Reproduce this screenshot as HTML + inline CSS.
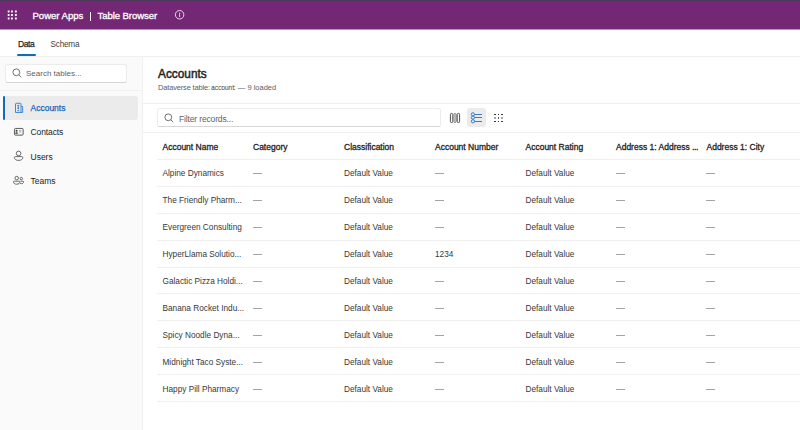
<!DOCTYPE html>
<html><head><meta charset="utf-8">
<style>
*{box-sizing:border-box;margin:0;padding:0}
html,body{width:800px;height:430px;overflow:hidden;background:#fff;font-family:"Liberation Sans",sans-serif;color:#242424}
.a{position:absolute;white-space:nowrap}
.t{position:absolute;white-space:nowrap;line-height:1;transform-origin:0 0}
</style></head><body>

<style>
#hdr{position:absolute;left:0;top:0;width:800px;height:29px;background:#742774;border-top:1px solid #4d3a5c}
.ht{color:#fff;font-size:9.6px;-webkit-text-stroke:0.3px #fff}
.tab{font-size:8.5px}
#side{position:absolute;left:0;top:57px;width:143px;height:373px;background:#fafafa;border-right:1px solid #f0f0f0}
.box{position:absolute;background:#fff;border:1px solid #ececec;border-bottom-color:#d6d6d6;border-radius:2.5px}
.ph{font-size:8px;color:#5f5f5f}
.nl{font-size:8.5px;color:#242424}
.th{font-size:8.5px;color:#242424;-webkit-text-stroke:0.3px #242424}
.td{font-size:8.25px;color:#383838}
.dash{width:8.6px;height:1px;background:#a4a4a4}
</style>
<div class="a" style="left:0;top:29px;width:800px;height:1px;background:#b993b9"></div>
<div id="hdr">
  <svg class="a" style="left:0;top:0" width="22" height="24" fill="#fff"><rect x="7.7" y="9.5" width="1.9" height="1.9" rx="0.3"/><rect x="11.0" y="9.5" width="1.9" height="1.9" rx="0.3"/><rect x="14.9" y="9.5" width="1.9" height="1.9" rx="0.3"/><rect x="7.7" y="13.0" width="1.9" height="1.9" rx="0.3"/><rect x="11.0" y="13.0" width="1.9" height="1.9" rx="0.3"/><rect x="14.9" y="13.0" width="1.9" height="1.9" rx="0.3"/><rect x="7.7" y="16.5" width="1.9" height="1.9" rx="0.3"/><rect x="11.0" y="16.5" width="1.9" height="1.9" rx="0.3"/><rect x="14.9" y="16.5" width="1.9" height="1.9" rx="0.3"/></svg>
</div>
<div class="t ht" style="left:32.5px;top:11px;letter-spacing:-0.05px">Power Apps</div>
<div class="a" style="left:90px;top:12px;width:1px;height:9px;background:#fff"></div>
<div class="t ht" style="left:97.5px;top:11px;letter-spacing:-0.1px">Table Browser</div>
<svg class="a" style="left:174px;top:9px" width="11" height="11" viewBox="0 0 11 11" fill="none" stroke="#fff" stroke-width="0.8"><circle cx="5.6" cy="5.75" r="4.25"/><path d="M5.6 3.6v4.5" stroke-width="0.75"/></svg>
<div class="a" style="left:0;top:56px;width:800px;height:1px;background:#f0f0f0"></div>
<div class="t tab" style="left:18px;top:39.6px;-webkit-text-stroke:0.25px #242424;letter-spacing:-0.4px">Data</div>
<div class="t tab" style="left:50.5px;top:40.6px;color:#424242;font-size:8.2px;letter-spacing:-0.2px">Schema</div>
<div class="a" style="left:17px;top:54.3px;width:18.8px;height:2.2px;background:#0f6cbd;border-radius:1.1px"></div>
<div id="side"></div>
<div class="box" style="left:5px;top:64px;width:122px;height:19px"></div>
<svg class="a" style="left:11.5px;top:68px" width="10" height="10" viewBox="0 0 10 10" fill="none" stroke="#616161" stroke-width="0.9"><circle cx="4.3" cy="4.3" r="3.4"/><line x1="6.8" y1="6.8" x2="9.2" y2="9.2"/></svg>
<div class="t ph" style="left:26px;top:70px">Search tables...</div>
<div class="a" style="left:0;top:90px;width:142px;height:1px;background:#f0f0f0"></div>
<div class="a" style="left:3px;top:96px;width:135px;height:24px;background:#ebebeb;border-radius:3px"></div>
<div class="a" style="left:3px;top:96px;width:2.3px;height:24px;background:#0f6cbd;border-radius:1.2px"></div>
<svg class="a" style="left:14px;top:102px" width="10" height="12" viewBox="0 0 10 12" fill="none" stroke="#2f7bcf" stroke-width="0.9"><path d="M1.5 10.45V2.1a0.8 0.8 0 0 1 0.8-0.8h3.9a0.8 0.8 0 0 1 0.8 0.8V10.45z"/><path d="M7 4.3h1a0.7 0.7 0 0 1 0.7 0.7v5.45H7"/><path d="M3.3 3.4h2M4.3 3.4v4M3.3 6.2h2M3.3 8.7h2"/></svg>
<div class="t nl" style="left:30.5px;top:104px;color:#1a68b8;-webkit-text-stroke:0.25px #1a68b8">Accounts</div>
<svg class="a" style="left:13px;top:127px" width="12" height="10" viewBox="0 0 12 10" fill="none" stroke="#4a4a4a" stroke-width="0.9"><rect x="1.45" y="1.45" width="8.7" height="6.7" rx="1"/><circle cx="3.55" cy="3.7" r="1.05" fill="#3a3a3a" stroke="none"/><path d="M2.1 6.8c0-1 0.6-1.6 1.45-1.6s1.45 0.6 1.45 1.6z" fill="#3a3a3a" stroke="none"/><path d="M6 3.6h2.3M6 5h2.3" stroke="#8f8f8f" stroke-width="0.75"/></svg>
<div class="t nl" style="left:30.5px;top:128px;letter-spacing:-0.1px">Contacts</div>
<svg class="a" style="left:13px;top:150px" width="11" height="12" viewBox="0 0 11 12" fill="none" stroke="#505050" stroke-width="0.85"><circle cx="5.6" cy="3.45" r="2.3"/><path d="M1.4 7.6a1 1 0 0 1 1-1h6.4a1 1 0 0 1 1 1c0 1.7-1.7 2.8-4.2 2.8s-4.2-1.1-4.2-2.8z"/></svg>
<div class="t nl" style="left:30.5px;top:152.5px">Users</div>
<svg class="a" style="left:12px;top:174px" width="13" height="12" viewBox="0 0 13 12" fill="none" stroke="#505050" stroke-width="0.85"><circle cx="4.7" cy="4.1" r="1.75"/><circle cx="9.3" cy="4.6" r="1.2"/><path d="M1.5 7.9a0.7 0.7 0 0 1 0.7-0.7h5a0.7 0.7 0 0 1 0.7 0.7c0 1.4-1.3 2.3-3.2 2.3s-3.2-0.9-3.2-2.3z"/><path d="M8.4 7.2h2.5a0.7 0.7 0 0 1 0.7 0.7c0 1.1-0.9 1.8-2.3 1.8-0.5 0-0.9-0.1-1.2-0.2"/></svg>
<div class="t nl" style="left:30.5px;top:176.5px">Teams</div>

<div class="t" style="left:158.3px;top:67px;font-size:13px;-webkit-text-stroke:0.5px #242424;transform:scaleX(0.91)">Accounts</div>
<div class="t" style="left:158px;top:83.6px;font-size:7.5px;color:#616161;letter-spacing:-0.17px">Dataverse table:</div>
<div class="t" style="left:211px;top:85.6px;font-family:'Liberation Mono',monospace;font-size:6.6px;letter-spacing:-0.5px;color:#424242">account</div>
<div class="t" style="left:237.8px;top:83.6px;font-size:7.5px;color:#616161;letter-spacing:0px">— 9 loaded</div>
<div class="a" style="left:143px;top:103px;width:657px;height:1px;background:#f0f0f0"></div>
<div class="box" style="left:157px;top:108px;width:284px;height:19px"></div>
<svg class="a" style="left:163.7px;top:113px" width="10" height="10" viewBox="0 0 10 10" fill="none" stroke="#616161" stroke-width="0.9"><circle cx="4.3" cy="4.3" r="3.4"/><line x1="6.8" y1="6.8" x2="9.2" y2="9.2"/></svg>
<div class="t ph" style="left:179px;top:114.6px;font-size:8.5px;letter-spacing:-0.15px">Filter records...</div>
<svg class="a" style="left:449px;top:112px" width="12" height="12" viewBox="0 0 12 12" fill="none" stroke="#333" stroke-width="0.85"><rect x="1.4" y="1.4" width="2.4" height="9.2" rx="1.2"/><rect x="4.8" y="1.4" width="2.4" height="9.2" rx="1.2" fill="#c8c8c8" stroke="#8a8a8a"/><rect x="8.2" y="1.4" width="2.4" height="9.2" rx="1.2"/></svg>
<div class="a" style="left:467px;top:108px;width:19px;height:19px;background:#ebebeb;border-radius:3px"></div>
<svg class="a" style="left:470px;top:112px" width="13" height="12" viewBox="0 0 13 12" fill="none" stroke="#1f74c9" stroke-width="0.9"><circle cx="2.9" cy="2.3" r="1.6"/><circle cx="2.9" cy="5.6" r="1.6"/><circle cx="2.9" cy="9.3" r="1.6"/><path d="M4.5 2.5h7.5M4.5 5.5h7.5M4.5 9.5h7.5"/></svg>
<svg class="a" style="left:493px;top:112px" width="11" height="11" viewBox="0 0 11 11" fill="#3a3a3a"><rect x="1" y="2" width="2" height="1"/><rect x="5" y="2" width="1" height="1"/><rect x="8" y="2" width="2" height="1"/><rect x="1" y="5" width="2" height="2" fill-opacity="0.45"/><rect x="5" y="5" width="1" height="2" fill-opacity="0.8"/><rect x="8" y="5" width="2" height="2" fill-opacity="0.45"/><rect x="1" y="9" width="2" height="1"/><rect x="5" y="9" width="1" height="1"/><rect x="8" y="9" width="2" height="1"/></svg>
<div class="a" style="left:143px;top:132px;width:657px;height:1px;background:#f0f0f0"></div>

<div class="t th" style="left:162.5px;top:143px">Account Name</div>
<div class="t th" style="left:253px;top:143px">Category</div>
<div class="t th" style="left:344px;top:143px">Classification</div>
<div class="t th" style="left:435px;top:143px">Account Number</div>
<div class="t th" style="left:525.5px;top:143px">Account Rating</div>
<div class="t th" style="left:616px;top:143px">Address 1: Address <span style="letter-spacing:-0.4px">...</span></div>
<div class="t th" style="left:706.5px;top:143px">Address 1: City</div>
<div class="a" style="left:157px;top:159px;width:643px;height:1px;background:#f0f0f0"></div>
<div class="a" style="left:157px;top:186.00px;width:643px;height:1px;background:#f0f0f0"></div>
<div class="t td" style="left:162.5px;top:169.50px">Alpine Dynamics</div>
<div class="a dash" style="left:253px;top:173.00px"></div>
<div class="t td" style="left:344px;top:169.50px">Default Value</div>
<div class="a dash" style="left:435px;top:173.00px"></div>
<div class="t td" style="left:525.5px;top:169.50px">Default Value</div>
<div class="a dash" style="left:616px;top:173.00px"></div>
<div class="a dash" style="left:706px;top:173.00px"></div>
<div class="a" style="left:157px;top:213.00px;width:643px;height:1px;background:#f0f0f0"></div>
<div class="t td" style="left:162.5px;top:196.50px">The Friendly Pharm...</div>
<div class="a dash" style="left:253px;top:200.00px"></div>
<div class="t td" style="left:344px;top:196.50px">Default Value</div>
<div class="a dash" style="left:435px;top:200.00px"></div>
<div class="t td" style="left:525.5px;top:196.50px">Default Value</div>
<div class="a dash" style="left:616px;top:200.00px"></div>
<div class="a dash" style="left:706px;top:200.00px"></div>
<div class="a" style="left:157px;top:240.00px;width:643px;height:1px;background:#f0f0f0"></div>
<div class="t td" style="left:162.5px;top:223.50px">Evergreen Consulting</div>
<div class="a dash" style="left:253px;top:227.00px"></div>
<div class="t td" style="left:344px;top:223.50px">Default Value</div>
<div class="a dash" style="left:435px;top:227.00px"></div>
<div class="t td" style="left:525.5px;top:223.50px">Default Value</div>
<div class="a dash" style="left:616px;top:227.00px"></div>
<div class="a dash" style="left:706px;top:227.00px"></div>
<div class="a" style="left:157px;top:267.00px;width:643px;height:1px;background:#f0f0f0"></div>
<div class="t td" style="left:162.5px;top:250.50px">HyperLlama Solutio...</div>
<div class="a dash" style="left:253px;top:254.00px"></div>
<div class="t td" style="left:344px;top:250.50px">Default Value</div>
<div class="t td" style="left:435px;top:250.50px">1234</div>
<div class="t td" style="left:525.5px;top:250.50px">Default Value</div>
<div class="a dash" style="left:616px;top:254.00px"></div>
<div class="a dash" style="left:706px;top:254.00px"></div>
<div class="a" style="left:157px;top:293.00px;width:643px;height:1px;background:#f0f0f0"></div>
<div class="t td" style="left:162.5px;top:277.50px">Galactic Pizza Holdi...</div>
<div class="a dash" style="left:253px;top:281.00px"></div>
<div class="t td" style="left:344px;top:277.50px">Default Value</div>
<div class="a dash" style="left:435px;top:281.00px"></div>
<div class="t td" style="left:525.5px;top:277.50px">Default Value</div>
<div class="a dash" style="left:616px;top:281.00px"></div>
<div class="a dash" style="left:706px;top:281.00px"></div>
<div class="a" style="left:157px;top:320.00px;width:643px;height:1px;background:#f0f0f0"></div>
<div class="t td" style="left:162.5px;top:304.50px">Banana Rocket Indu...</div>
<div class="a dash" style="left:253px;top:308.00px"></div>
<div class="t td" style="left:344px;top:304.50px">Default Value</div>
<div class="a dash" style="left:435px;top:308.00px"></div>
<div class="t td" style="left:525.5px;top:304.50px">Default Value</div>
<div class="a dash" style="left:616px;top:308.00px"></div>
<div class="a dash" style="left:706px;top:308.00px"></div>
<div class="a" style="left:157px;top:347.00px;width:643px;height:1px;background:#f0f0f0"></div>
<div class="t td" style="left:162.5px;top:331.50px">Spicy Noodle Dyna...</div>
<div class="a dash" style="left:253px;top:335.00px"></div>
<div class="t td" style="left:344px;top:331.50px">Default Value</div>
<div class="a dash" style="left:435px;top:335.00px"></div>
<div class="t td" style="left:525.5px;top:331.50px">Default Value</div>
<div class="a dash" style="left:616px;top:335.00px"></div>
<div class="a dash" style="left:706px;top:335.00px"></div>
<div class="a" style="left:157px;top:374.00px;width:643px;height:1px;background:#f0f0f0"></div>
<div class="t td" style="left:162.5px;top:358.50px">Midnight Taco Syste...</div>
<div class="a dash" style="left:253px;top:362.00px"></div>
<div class="t td" style="left:344px;top:358.50px">Default Value</div>
<div class="a dash" style="left:435px;top:362.00px"></div>
<div class="t td" style="left:525.5px;top:358.50px">Default Value</div>
<div class="a dash" style="left:616px;top:362.00px"></div>
<div class="a dash" style="left:706px;top:362.00px"></div>
<div class="a" style="left:157px;top:401.00px;width:643px;height:1px;background:#f0f0f0"></div>
<div class="t td" style="left:162.5px;top:385.50px">Happy Pill Pharmacy</div>
<div class="a dash" style="left:253px;top:389.00px"></div>
<div class="t td" style="left:344px;top:385.50px">Default Value</div>
<div class="a dash" style="left:435px;top:389.00px"></div>
<div class="t td" style="left:525.5px;top:385.50px">Default Value</div>
<div class="a dash" style="left:616px;top:389.00px"></div>
<div class="a dash" style="left:706px;top:389.00px"></div>
</body></html>
